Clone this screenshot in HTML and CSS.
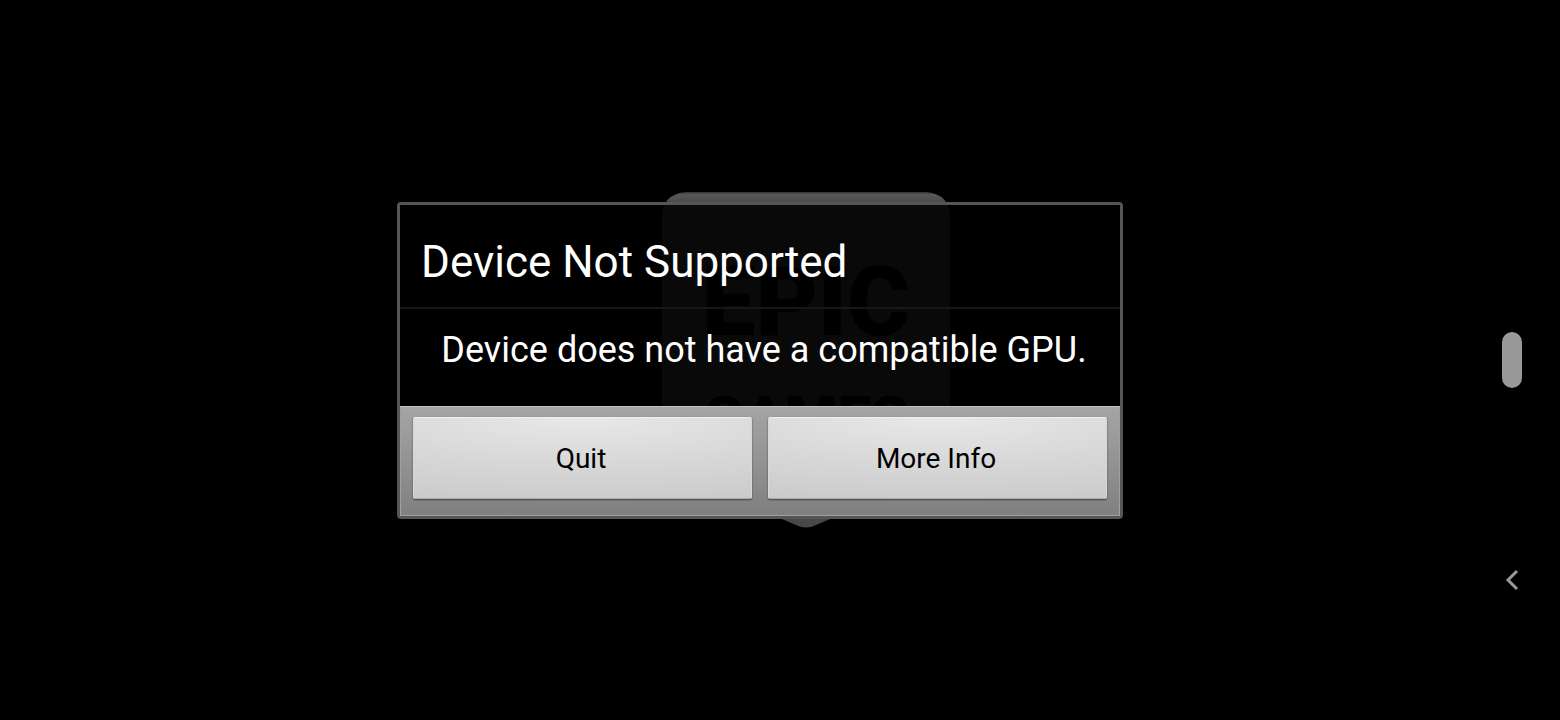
FILE: index.html
```html
<!DOCTYPE html>
<html lang="en">
<head>
<meta charset="utf-8">
<meta name="viewport" content="width=device-width, initial-scale=1">
<title>Device Not Supported</title>
<link rel="stylesheet" href="styles.css">
</head>
<body>
<div class="screen">
  <div class="splash" aria-hidden="true">
    <div class="logo">
      <svg class="shield" viewBox="0 0 288 336">
        <defs>
          <linearGradient id="shade" x1="0" y1="0" x2="0" y2="1">
            <stop offset="0" stop-color="#333"/>
            <stop offset="0.008" stop-color="#585858"/>
            <stop offset="0.035" stop-color="#484848"/>
            <stop offset="1" stop-color="#484848"/>
          </linearGradient>
        </defs>
        <path fill="url(#shade)" d="M24 0H264Q288 2 288 26V262Q288 277 274 282L154 333Q144 338 134 333L14 282Q0 277 0 262V26Q0 2 24 0Z"/>
      </svg>
      <div class="wordmark"><span class="epic">EPIC</span><span class="games">GAMES</span></div>
    </div>
  </div>
  <main class="stage">
    <section class="dialog" role="alertdialog" aria-labelledby="title" aria-describedby="message">
      <h1 class="title" id="title">Device Not Supported</h1>
      <p class="message" id="message">Device does not have a compatible GPU.</p>
      <div class="actions">
        <button class="action" type="button">Quit</button>
        <button class="action" type="button">More Info</button>
      </div>
    </section>
  </main>
  <nav class="system-bar" aria-label="System navigation">
    <span></span>
    <button class="home" type="button" aria-label="Home"></button>
    <button class="back" type="button" aria-label="Back">
      <svg width="14" height="22" viewBox="0 0 14 22" fill="none" stroke="#999" stroke-width="3"><path d="M12 2L3 11L12 20"/></svg>
    </button>
  </nav>
</div>
</body>
</html>
```
FILE: styles.css
```css
* {
  box-sizing: border-box;
}

body {
  margin: 0;
  background: #000;
  color: #fff;
  font-family: Roboto, "Liberation Sans", sans-serif;
}

.screen {
  position: relative;
  display: grid;
  grid-template-columns: minmax(0, 1fr) 96px;
  min-height: 100vh;
}

.splash {
  position: absolute;
  inset: 0 0 0 52px;
  display: grid;
  place-items: center;
}

.logo {
  position: relative;
  width: 288px;
}

.shield {
  display: block;
  width: 100%;
}

.wordmark {
  position: absolute;
  inset: 44px 0 auto;
  display: flex;
  flex-direction: column;
  gap: 20px;
  align-items: center;
  color: #000;
  font-weight: 900;
}

.epic {
  font-family: "Liberation Sans Narrow", Roboto, sans-serif;
  font-size: 96px;
  line-height: 132px;
}

.games {
  font-size: 60px;
  line-height: 60px;
}

.stage {
  position: relative;
  display: grid;
  place-items: center;
  padding-left: 56px;
}

.dialog {
  width: min(726px, 100%);
  border: 3px solid #555;
  border-radius: 4px;
  background: rgba(0, 0, 0, 0.87);
}

.title {
  margin: 0;
  padding: 31px 21px 19px;
  border-bottom: 2px solid #171717;
  font-size: 44px;
  font-weight: 400;
  line-height: 52px;
}

.message {
  margin: 0;
  padding: 20px 16px 35px 24px;
  font-size: 36px;
  line-height: 42px;
  text-align: center;
}

.actions {
  display: grid;
  grid-template-columns: 1fr 1fr;
  gap: 16px;
  padding: 10px 12px 16px;
  border: 1px solid #a0a0a0;
  border-top-color: #c4c4c4;
  background: linear-gradient(#a5a5a5, #808080);
}

.action {
  height: 82px;
  padding: 3px 3px 0 0;
  border: 1px solid #d8d8d8;
  border-top-color: #f0f0f0;
  border-bottom-color: #aaa;
  border-radius: 2px;
  background: radial-gradient(140% 110% at top, #e8e8e8, #d8d8d8 50%, #cacaca);
  box-shadow: 0 1px 2px #444;
  color: #000;
  font: inherit;
  font-size: 28px;
  line-height: 32px;
}

.message {
  padding-left: 24px;
}

.system-bar {
  position: relative;
  display: grid;
  grid-template-rows: 1fr 56px 1fr;
  place-items: center;
}

.home {
  width: 20px;
  height: 56px;
  padding: 0;
  border: 0;
  border-radius: 10px;
  background: #999;
}

.back {
  align-self: start;
  display: grid;
  place-items: center;
  width: 48px;
  height: 48px;
  margin-top: 168px;
  padding: 0;
  border: 0;
  background: none;
}
```
